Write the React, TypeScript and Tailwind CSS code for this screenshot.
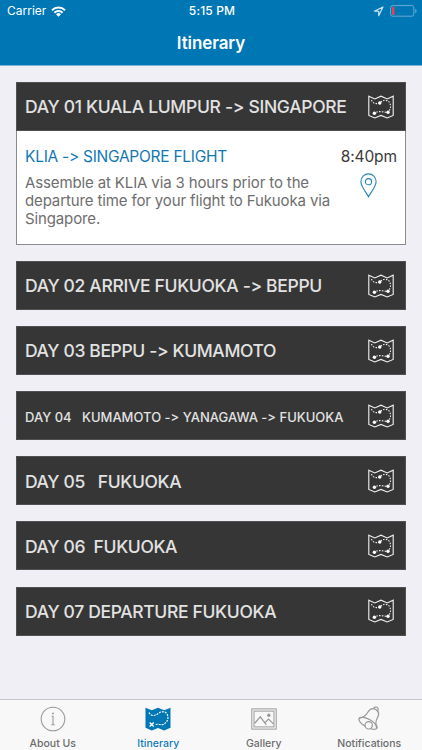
import React from "react";
import clsx from "clsx";

type Day = {
  id: number;
  title: string;
  titleClass: string;
};

const days: Day[] = [
  { id: 2, title: "DAY 02 ARRIVE FUKUOKA -> BEPPU", titleClass: "text-[17.5px] pt-px tracking-[-0.33px]" },
  { id: 3, title: "DAY 03 BEPPU -> KUMAMOTO", titleClass: "text-[17.5px] pt-px tracking-[-0.37px]" },
  {
    id: 4,
    title: "DAY 04   KUMAMOTO -> YANAGAWA -> FUKUOKA",
    titleClass: "text-[13px] pt-1",
  },
  { id: 5, title: "DAY 05   FUKUOKA", titleClass: "text-[17.5px] pt-[2px] tracking-[-0.37px]" },
  { id: 6, title: "DAY 06  FUKUOKA", titleClass: "text-[17.5px] pt-[2px] tracking-[-0.37px]" },
  { id: 7, title: "DAY 07 DEPARTURE FUKUOKA", titleClass: "text-[17.5px] pt-[2px] tracking-[-0.34px]" },
];

function App() {
  return (
    <div className="flex h-[750px] w-[422px] flex-col overflow-hidden bg-[#efeff5] font-['Inter','Liberation_Sans',sans-serif]">
      <Header />
      <main className="flex flex-1 flex-col gap-[16.1px] px-4 pt-4">
        <section className="h-[163px] border border-[#8b8b8f] bg-white">
          <DayBar
            title="DAY 01 KUALA LUMPUR -> SINGAPORE"
            titleClass="text-[17.5px] pt-px tracking-[-0.31px]"
            className="-mx-px -mt-px"
          />
          <div className="flex justify-between pt-4 pr-2 pl-2">
            <div>
              <h2 className="text-[15.5px] leading-5 tracking-[-0.27px] whitespace-nowrap text-[#1278b4] [font-feature-settings:'calt'_0]">
                KLIA -&gt; SINGAPORE FLIGHT
              </h2>
              <p className="mt-[7px] text-[15px] leading-[18px] tracking-[-0.13px] whitespace-nowrap text-[#6e6e6e]">
                Assemble at KLIA via 3 hours prior to the
                <br />
                departure time for your flight to Fukuoka via
                <br />
                Singapore.
              </p>
            </div>
            <div className="flex flex-col items-end">
              <span className="text-[15.5px] leading-5 tracking-[-0.1px] text-[#3a3a3a]">8:40pm</span>
              <PinIcon />
            </div>
          </div>
        </section>
        {days.map((day) => (
          <DayBar key={day.id} title={day.title} titleClass={day.titleClass} />
        ))}
      </main>
      <TabBar />
    </div>
  );
}

export default App;

const Header = () => (
  <header className="h-[66px] border-b border-[#7db4d8] bg-[#0077b5] text-white">
    <div className="grid h-[22px] grid-cols-3 items-center pr-[5px] pl-[7px] text-[12px]">
      <div className="flex items-center gap-[5px]">
        <span>Carrier</span>
        <WifiIcon />
      </div>
      <span className="text-center font-medium tracking-[0.15px]">5:15 PM</span>
      <div className="flex items-center justify-end gap-[6px]">
        <LocationIcon />
        <BatteryIcon />
      </div>
    </div>
    <h1 className="text-center text-[17px] leading-[43px] font-semibold tracking-[-0.1px]">
      Itinerary
    </h1>
  </header>
);

const DayBar = ({
  title,
  titleClass,
  className,
}: {
  title: string;
  titleClass: string;
  className?: string;
}) => (
  <div
    className={clsx(
      "flex h-[49px] shrink-0 items-center justify-between border border-[#505052] bg-[#363636] pr-[11px] pl-2",
      className,
    )}
  >
    <span
      className={clsx(
        "font-medium whitespace-pre text-[#e2e2e2] [font-feature-settings:'calt'_0]",
        titleClass,
      )}
    >
      {title}
    </span>
    <RouteMapIcon />
  </div>
);

const TabBar = () => (
  <nav className="flex h-[51px] shrink-0 border-t border-[#c5c5ca] bg-[#f8f8f9]">
    <Tab label="About Us" icon={<InfoIcon />} />
    <Tab label="Itinerary" icon={<TreasureMapIcon />} active />
    <Tab label="Gallery" icon={<GalleryIcon />} />
    <Tab label="Notifications" icon={<BellIcon />} />
  </nav>
);

const Tab = ({
  label,
  icon,
  active = false,
}: {
  label: string;
  icon: React.ReactNode;
  active?: boolean;
}) => (
  <div
    className={clsx(
      "flex flex-1 flex-col items-center pt-[6px] text-[10.5px] leading-[13px] font-medium",
      active ? "text-[#0f7ab8]" : "text-[#6c6c6c]",
    )}
  >
    <div className="size-[26px] shrink-0">{icon}</div>
    <span className="mt-[5px] whitespace-nowrap">{label}</span>
  </div>
);

/* Icons */

const WifiIcon = () => (
  <svg width="15" height="11" viewBox="0 0 15 11" fill="none" stroke="currentColor" strokeWidth="2">
    <path d="M1 4.2a9.3 9.3 0 0 1 13 0M3.4 6.7a5.9 5.9 0 0 1 8.2 0" />
    <path d="M7.5 10.8 5 8.3a3.6 3.6 0 0 1 5 0z" fill="currentColor" stroke="none" />
  </svg>
);

const LocationIcon = () => (
  <svg width="11" height="11" viewBox="0 0 11 11" fill="none" stroke="#d5e8f4" strokeWidth="1.1">
    <path d="M10 1 1.3 5.2h4.4v4.5z" strokeLinejoin="round" />
  </svg>
);

const BatteryIcon = () => (
  <svg width="27" height="12" viewBox="0 0 27 12" fill="none">
    <rect x="0.6" y="0.6" width="23.2" height="10.6" rx="2" stroke="#67a9d2" />
    <rect x="2" y="2" width="2.4" height="8" rx="0.6" fill="#e8434a" />
    <path d="M25.2 4v4c1-.4 1.4-1.1 1.4-2s-.4-1.6-1.4-2z" fill="#67a9d2" />
  </svg>
);

const RouteMapIcon = () => (
  <svg width="26" height="24" viewBox="0 0 26 24" fill="none" stroke="#f2f2f2" strokeWidth="1.1">
    <path d="M.8 1.2 6.8 4 13 1.2 19.2 4l6-2.8v19.2L19.2 23 13 20.4 6.8 23l-6-2.6z" />
    <path
      d="M3.5 5c1.2 3.6 4.8 4.3 8.3 3 2.8-3.4 7.6-3.7 9.8-.3 1.7 3.4 1 6.600-1.600 9.600-4 .3-8.500-2.300-13.600.9"
      strokeDasharray="1.5 1.3"
    />
    <g fill="#fff" stroke="none">
      <circle cx="11.8" cy="8" r="1.7" />
      <circle cx="20" cy="17.3" r="1.7" />
      <circle cx="6.4" cy="18.2" r="1.7" />
    </g>
  </svg>
);

const PinIcon = () => (
  <svg
    className="mt-[6px] mr-[20px]"
    width="17"
    height="25"
    viewBox="0 0 17 25"
    fill="none"
    stroke="#2585bd"
    strokeWidth="1.1"
  >
    <path d="M8.5 23.8C6.5 19.5.9 14 .9 8.5a7.6 7.6 0 0 1 15.2 0c0 5.5-5.6 11-7.6 15.3z" />
    <circle cx="8.5" cy="8.7" r="3.1" />
  </svg>
);

const InfoIcon = () => (
  <svg width="26" height="26" viewBox="0 0 26 26" fill="none" stroke="#9a9a9a">
    <circle cx="13" cy="13" r="11.8" strokeWidth="1.1" />
    <path d="M11.6 10.3H13v8.400M11.300 18.700h3.400" strokeWidth="1.1" />
    <circle cx="13" cy="7.6" r="1" fill="#9a9a9a" stroke="none" />
  </svg>
);

const TreasureMapIcon = () => (
  <svg width="26" height="26" viewBox="0 0 26 26" fill="none">
    <path
      d="M.5 1.8 6.8 4.2 13 1.8l6.2 2.4 6.3-2.4v20l-6.3 2.700L13 22l-6.2 2.5-6.3-2.7z"
      fill="#0077b5"
    />
    <path
      d="M4 6.5c1.500 3.500 5.500 4 8.500 1.500s7.500-3.500 9.700.2c2 4.500 0 8-3.700 10.200-3 .8-5.500-.8-8.500.2"
      stroke="#fff"
      strokeWidth="1.1"
      strokeDasharray="2 1"
    />
    <path d="m4.7 16.5 4 4m0-4-4 4" stroke="#fff" strokeWidth="1.4" />
  </svg>
);

const GalleryIcon = () => (
  <svg width="26" height="26" viewBox="0 0 26 26" fill="none" stroke="#999">
    <rect x=".8" y="2.9" width="24.4" height="20.2" strokeWidth="1" />
    <rect x="3" y="5.1" width="20" height="15.8" strokeWidth="1" />
    <path
      d="m3.500 17.500 5.800-6.700 6 8M12.800 15.500l1.200 1.100 3.500-3.600 5.200 5.200"
      strokeWidth="1.2"
    />
    <circle cx="17.8" cy="9.2" r="1.7" fill="#999" stroke="none" />
  </svg>
);

const BellIcon = () => (
  <svg width="26" height="26" viewBox="0 0 26 26" fill="none" stroke="#999" strokeWidth="1.2">
    <path d="M3.200 12.300c4.800-.8 6.800-2.800 8.600-6 2-3.400 5-4.600 8-2.900 3 1.700 3.500 4.900 1.600 8.400-1.900 3.400-2.100 6.600-.6 10.400" />
    <ellipse cx="12" cy="17.3" rx="10.2" ry="4" transform="rotate(29 12 17.3)" />
    <circle cx="12.7" cy="19.3" r="3.7" fill="#f8f8f9" />
    <path d="M17.7 2.5c.4-1.700 3-2 4-.6 1 1.300.4 2.900-.8 3.500" />
  </svg>
);
